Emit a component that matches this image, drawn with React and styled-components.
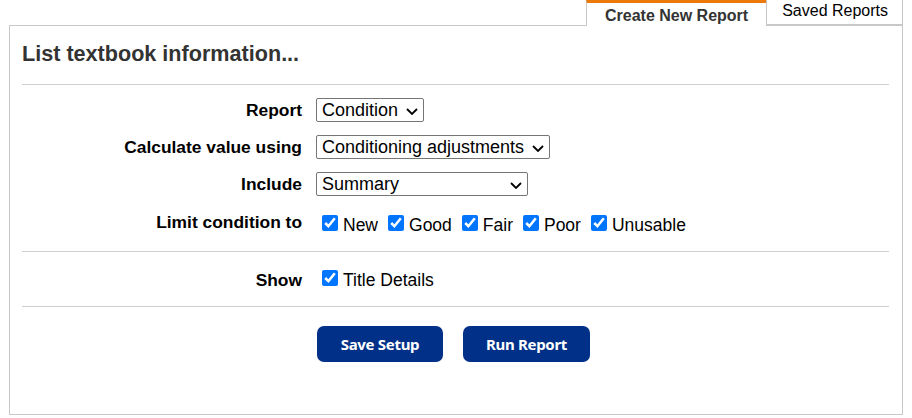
import styled, { createGlobalStyle } from "styled-components";

const GlobalStyle = createGlobalStyle`
  body {
    margin: 0;
    background: #fff;
    font-family: "Liberation Sans", Arial, sans-serif;
    color: #000;
  }
`;

const Page = styled.div`
  padding: 0 9px;
  width: 912px;
  box-sizing: border-box;
`;

const TabBar = styled.div`
  display: flex;
  justify-content: flex-end;
  height: 25px;
  position: relative;
  z-index: 1;
`;

const Tab = styled.div`
  box-sizing: border-box;
  height: ${(p) => (p.$active ? "26px" : "25px")};
  padding: ${(p) => (p.$active ? "2px 18px 0" : "0 14px 3px 15px")};
  display: flex;
  align-items: center;
  background: #fff;
  border: 1px solid #c8c8c8;
  border-top: ${(p) => (p.$active ? "3px solid #ec7a08" : "none")};
  border-bottom: ${(p) => (p.$active ? "none" : "1px solid #c8c8c8")};
  margin-left: ${(p) => (p.$active ? "0" : "-1px")};
  font-size: 16px;
  font-weight: ${(p) => (p.$active ? 700 : 400)};
  color: ${(p) => (p.$active ? "#333" : "#000")};
`;

const Panel = styled.div`
  box-sizing: border-box;
  height: 390px;
  border: 1px solid #c8c8c8;
  padding: 16px 13px 0 12px;
`;

const Heading = styled.h2`
  margin: 0;
  font-size: 21.6px;
  line-height: 24px;
  font-weight: 700;
  color: #333;
`;

const Divider = styled.hr`
  border: none;
  border-top: 1px solid #cfcfcf;
  margin: ${(p) => p.$m || "0"};
`;

const Form = styled.div`
  display: grid;
  grid-template-columns: 280px 1fr;
  column-gap: 14px;
  row-gap: 13px;
  align-items: center;
`;

const Label = styled.div`
  text-align: right;
  font-size: 17.4px;
  font-weight: 700;
  color: #000;
`;

const SelectWrap = styled.div`
  position: relative;
  justify-self: start;
  width: ${(p) => (p.$w ? `${p.$w}px` : "auto")};
  height: 24px;
`;

const Select = styled.select`
  appearance: none;
  -webkit-appearance: none;
  box-sizing: border-box;
  width: ${(p) => (p.$fill ? "100%" : "auto")};
  height: 24px;
  padding: 0 24px 0 5px;
  border: 1px solid #767676;
  border-radius: 2px;
  background: #fff;
  font-family: "Liberation Sans", Arial, sans-serif;
  font-size: 18px;
  color: #000;
`;

const Chevron = styled.svg`
  position: absolute;
  right: 6px;
  top: 10px;
  pointer-events: none;
`;

const Checks = styled.div`
  display: flex;
  align-items: center;
  gap: 10px;
  padding: ${(p) => p.$pad || "0"};
`;

const CheckItem = styled.label`
  display: flex;
  align-items: center;
  gap: 5px;
  font-size: 17.5px;
  color: #000;
`;

const Box = styled.input`
  width: 16px;
  height: 16px;
  margin: 0;
  accent-color: #0075ff;
  position: relative;
  top: -3px;
`;

const Buttons = styled.div`
  display: flex;
  gap: 20px;
  padding: 19px 0 0 295px;
`;

const Button = styled.button`
  width: ${(p) => p.$w}px;
  height: 36px;
  border: none;
  border-radius: 7px;
  background: #003087;
  color: #fff;
  font-family: "Noto Sans", "Open Sans", sans-serif;
  font-weight: 700;
  font-size: 15px;
  letter-spacing: -0.3px;
`;

const Dropdown = ({ w, value }) => (
  <SelectWrap $w={w}>
    <Select defaultValue={value} $fill={!!w}>
      <option>{value}</option>
    </Select>
    <Chevron width="12" height="7" viewBox="0 0 12 7">
      <polyline points="1,1 6,6 11,1" fill="none" stroke="#000" strokeWidth="1.8" />
    </Chevron>
  </SelectWrap>
);

const Check = ({ label }) => (
  <CheckItem>
    <Box type="checkbox" defaultChecked />
    {label}
  </CheckItem>
);

export default function App() {
  const conditions = ["New", "Good", "Fair", "Poor", "Unusable"];
  return (
    <Page>
      <GlobalStyle />
      <TabBar>
        <Tab $active>Create New Report</Tab>
        <Tab>Saved Reports</Tab>
      </TabBar>
      <Panel>
        <Heading>List textbook information...</Heading>
        <Divider $m="18px 0 13px" />
        <Form>
          <Label>Report</Label>
          <Dropdown value="Condition" />
          <Label>Calculate value using</Label>
          <Dropdown value="Conditioning adjustments" />
          <Label>Include</Label>
          <Dropdown w={212} value="Summary" />
          <Label>Limit condition to</Label>
          <Checks $pad="6px 0 0 6px">
            {conditions.map((c) => (
              <Check key={c} label={c} />
            ))}
          </Checks>
        </Form>
        <Divider $m="15px 0 17px" />
        <Form>
          <Label>Show</Label>
          <Checks $pad="1px 0 0 6px">
            <Check label="Title Details" />
          </Checks>
        </Form>
        <Divider $m="15px 0 0" />
        <Buttons>
          <Button $w={126}>Save Setup</Button>
          <Button $w={127}>Run Report</Button>
        </Buttons>
      </Panel>
    </Page>
  );
}
